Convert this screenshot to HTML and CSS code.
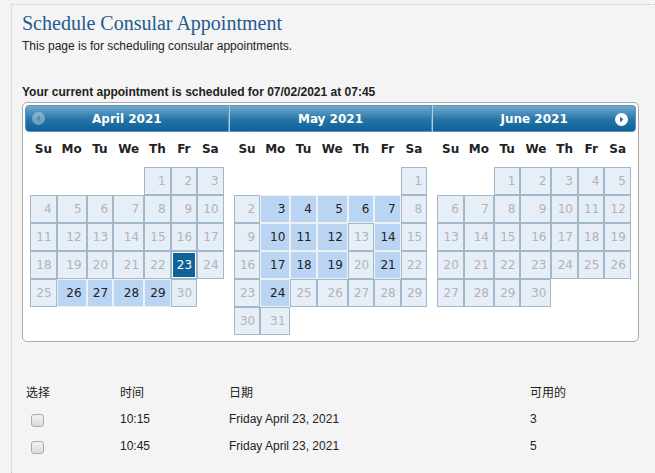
FILE: index.html
```html
<!DOCTYPE html>
<html>
<head>
    <title>Schedule Consular Appointment</title>
    <link rel="stylesheet" href="styles.css">
</head>
<body>
    <div class="page">
        <h1>Schedule Consular Appointment</h1>
        <p class="intro">This page is for scheduling consular appointments.</p>
        <p class="current">Your current appointment is scheduled for 07/02/2021 at 07:45</p>

        <div class="datepicker" id="datepicker"></div>

        <table class="slots">
            <colgroup>
                <col class="col-pick">
                <col class="col-time">
                <col class="col-date">
                <col>
            </colgroup>
            <thead>
                <tr>
                    <th>选择</th>
                    <th>时间</th>
                    <th>日期</th>
                    <th>可用的</th>
                </tr>
            </thead>
            <tbody>
                <tr>
                    <td><input type="checkbox" class="pick"></td>
                    <td>10:15</td>
                    <td>Friday April 23, 2021</td>
                    <td>3</td>
                </tr>
                <tr>
                    <td><input type="checkbox" class="pick"></td>
                    <td>10:45</td>
                    <td>Friday April 23, 2021</td>
                    <td>5</td>
                </tr>
            </tbody>
        </table>
    </div>

    <script>
        const picker = document.getElementById('datepicker');
        const dayNames = ['Su', 'Mo', 'Tu', 'We', 'Th', 'Fr', 'Sa'];
        const months = [
            { title: 'April 2021', year: 2021, month: 3, selected: 23, open: [26, 27, 28, 29] },
            { title: 'May 2021', year: 2021, month: 4, open: [3, 4, 5, 6, 7, 10, 11, 12, 14, 17, 18, 19, 21, 24] },
            { title: 'June 2021', year: 2021, month: 5, open: [] }
        ];

        const prevIcon = '<svg class="dp-prev" width="13" height="13" viewBox="0 0 13 13">' +
            '<circle cx="6.5" cy="6.5" r="6.5" fill="#fff" fill-opacity=".35"/>' +
            '<path d="M7.6 3.6 L4.6 6.5 L7.6 9.4 Z" fill="#2a78ad" fill-opacity=".7"/></svg>';
        const nextIcon = '<svg class="dp-next" width="13" height="13" viewBox="0 0 13 13">' +
            '<circle cx="6.5" cy="6.5" r="6.5" fill="#fff"/>' +
            '<path d="M5.2 3.6 L8.2 6.5 L5.2 9.4 Z" fill="#0f6399"/></svg>';

        months.forEach((m, i) => {
            const group = document.createElement('div');
            group.className = 'dp-group';

            let html = '<div class="dp-header">';
            if (i === 0) html += prevIcon;
            html += '<span class="dp-title">' + m.title + '</span>';
            if (i === months.length - 1) html += nextIcon;
            html += '</div><table class="dp-table"><thead><tr>';
            dayNames.forEach(d => html += '<th>' + d + '</th>');
            html += '</tr></thead><tbody>';

            const first = new Date(m.year, m.month, 1).getDay();
            const total = new Date(m.year, m.month + 1, 0).getDate();
            const cells = [];
            for (let b = 0; b < first; b++) cells.push('<td></td>');
            for (let d = 1; d <= total; d++) {
                let cls = 'off';
                if (d === m.selected) cls = 'sel';
                else if (m.open.includes(d)) cls = 'on';
                cells.push(`<td class="${cls}">${d}</td>`);
            }
            while (cells.length % 7) cells.push('<td></td>');

            for (let r = 0; r < cells.length; r += 7) {
                html += '<tr>' + cells.slice(r, r + 7).join('') + '</tr>';
            }
            html += '</tbody></table>';

            group.innerHTML = html;
            picker.appendChild(group);
        });
    </script>
</body>
</html>
```

FILE: styles.css
```css
body {
    margin: 0;
    background-color: #f4f4f4;
    font-family: "Liberation Sans", Arial, "Noto Sans CJK SC", sans-serif;
    font-size: 12px;
    color: #222;
}

.page {
    margin: 4px 0 0 11px;
    border-top: 1px dotted #c4c4c4;
    border-left: 1px dotted #c4c4c4;
    padding: 6px 16px 0 10px;
    min-height: 480px;
}

h1 {
    margin: 0 0 4px;
    font-family: "Liberation Serif", Georgia, serif;
    font-size: 20px;
    font-weight: normal;
    line-height: 24px;
    color: #1f5b8e;
}

.intro {
    margin: 0;
    line-height: 15px;
}

.current {
    margin: 31px 0 2px;
    line-height: 15px;
    font-weight: bold;
}

/* calendar */

.datepicker {
    display: flex;
    align-items: flex-start;
    padding: 2px;
    border: 1px solid #aaa;
    border-radius: 5px;
    background-color: #fff;
    font-family: "DejaVu Sans", Verdana, sans-serif;
}

.dp-group {
    width: 33.333%;
}

.dp-header {
    position: relative;
    display: flex;
    justify-content: center;
    align-items: center;
    height: 25px;
    border: 1px solid #5a94bb;
    border-left-width: 0;
    background: linear-gradient(#70aace, #2574a8 55%, #0c6197);
    color: #fff;
    font-size: 12px;
    font-weight: bold;
}

.dp-group:first-child .dp-header {
    border-left-width: 1px;
    border-radius: 4px 0 0 4px;
}

.dp-group + .dp-group .dp-header {
    border-left: 1px solid #b3cde0;
}

.dp-group:last-child .dp-header {
    border-radius: 0 4px 4px 0;
}

.dp-prev,
.dp-next {
    position: absolute;
    top: 6px;
}

.dp-prev {
    left: 6px;
}

.dp-next {
    right: 7px;
    top: 7px;
}

.dp-table {
    width: 95%;
    margin: 0 auto 4px;
    border-collapse: separate;
    border-spacing: 0;
    font-size: 12px;
}

.dp-table th {
    padding: 10px 2px;
    line-height: 15px;
    font-weight: bold;
    color: #222;
    text-align: center;
}

.dp-table td {
    height: 26px;
    padding: 0 4px 0 0;
    border: 1px solid transparent;
    line-height: 26px;
    text-align: right;
}

.dp-table td.off {
    background-color: #e6eef8;
    border-color: #a3b9c9;
    color: #b3b3b3;
}

.dp-table td.on {
    background-color: #b9d5f3;
    border-color: #eef1f4;
    color: #222;
}

.dp-table td.sel {
    background-color: #0e6399;
    border-color: #9fb4c4;
    color: #fff;
    box-shadow: inset 0 0 0 1px #fff;
}

/* time slots */

.slots {
    width: 100%;
    margin-top: 36px;
    border-collapse: collapse;
    table-layout: fixed;
}

.col-pick {
    width: 94px;
}

.col-time {
    width: 109px;
}

.col-date {
    width: 301px;
}

.slots th,
.slots td {
    height: 27px;
    padding: 0 4px;
    text-align: left;
    font-weight: normal;
    vertical-align: middle;
}

.pick {
    appearance: none;
    width: 13px;
    height: 13px;
    margin: 3px 0 0 5px;
    border: 1px solid #acacac;
    border-radius: 3px;
    background: linear-gradient(#f3f3f3, #dadada);
    vertical-align: middle;
}
```
